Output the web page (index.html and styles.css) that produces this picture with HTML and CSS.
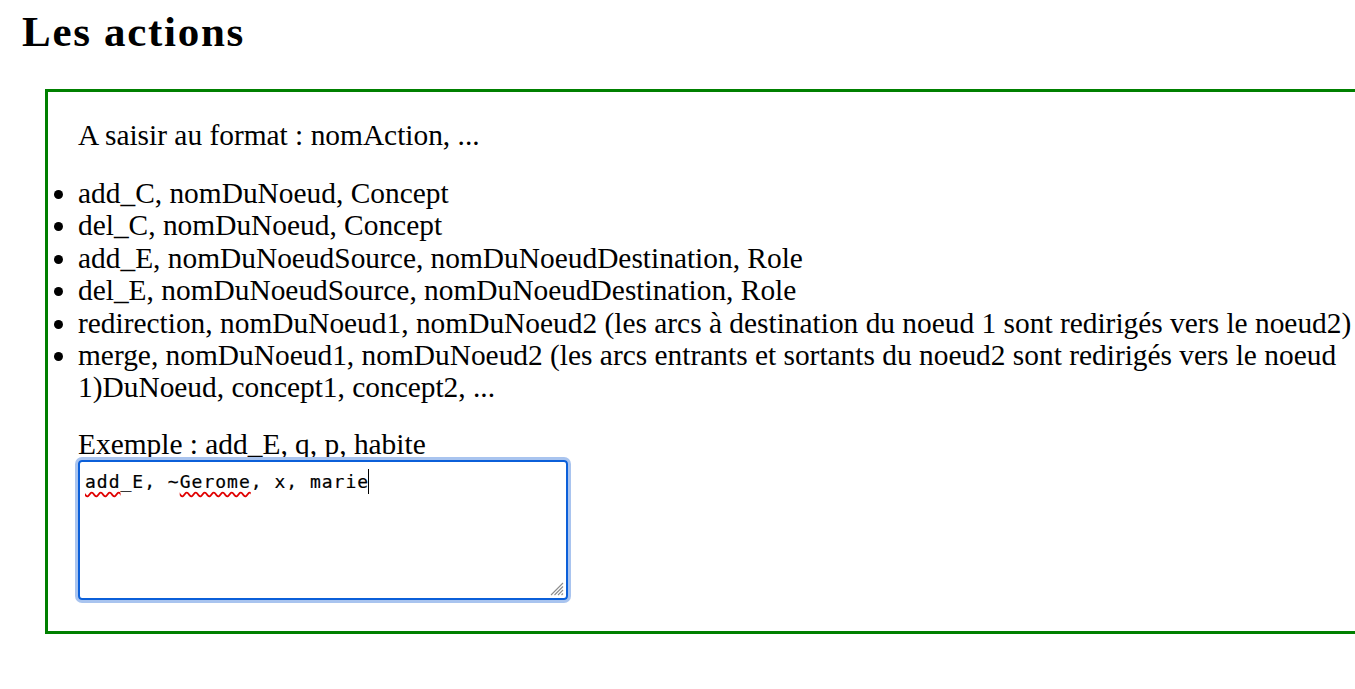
FILE: index.html
```html
<!DOCTYPE html>
<html lang="fr">
<head>
<meta charset="utf-8">
<title>Les actions</title>
<link rel="stylesheet" href="styles.css">
</head>
<body>
<h1 class="title">Les actions</h1>
<div class="panel">
  <p class="intro">A saisir au format : nomAction, ...</p>
  <ul class="actions">
    <li>add_C, nomDuNoeud, Concept</li>
    <li>del_C, nomDuNoeud, Concept</li>
    <li>add_E, nomDuNoeudSource, nomDuNoeudDestination, Role</li>
    <li>del_E, nomDuNoeudSource, nomDuNoeudDestination, Role</li>
    <li>redirection, nomDuNoeud1, nomDuNoeud2 (les arcs à destination du noeud 1 sont redirigés vers le noeud2)</li>
    <li>merge, nomDuNoeud1, nomDuNoeud2 (les arcs entrants et sortants du noeud2 sont redirigés vers le noeud 1)DuNoeud, concept1, concept2, ...</li>
  </ul>
  <p class="example">Exemple : add_E, q, p, habite</p>
  <div class="editor" role="textbox" aria-multiline="true"><span class="misspelled">add</span>_E, ~<span class="misspelled">Gerome</span>, x, marie<span class="caret"></span><svg class="grip" width="14" height="14" viewBox="0 0 14 14"><path d="M13 1 L1 13 M13 4.5 L4.5 13 M13 8 L8 13 M13 11.5 L11.5 13" stroke="#8d8d8d" stroke-width="1.1"/></svg></div>
</div>
</body>
</html>
```
FILE: styles.css
```css
html, body {
  margin: 0;
  padding: 0;
  background: #ffffff;
  overflow: hidden;
}
body {
  font-family: Georgia, "Liberation Serif", serif;
  color: #000;
  width: 1355px;
}
.title {
  font-size: 43px;
  line-height: 46px;
  font-weight: bold;
  letter-spacing: 1.7px;
  margin: 9px 0 0 22px;
}
.panel {
  margin: 34px 0 0 45px;
  border: 3px solid #008000;
  padding: 27px 0 31px 30px;
  width: 1290px;
  font-size: 29.4px;
  line-height: 32.4px;
}
.intro {
  margin: 0 0 25.6px 0;
}
.actions {
  margin: 0 0 25.6px 0;
  padding: 0;
  list-style: disc outside;
}
.example {
  margin: 0;
  line-height: 30px;
}
.editor {
  position: relative;
  box-sizing: border-box;
  width: 490px;
  height: 140px;
  margin-top: 1px;
  border: 2px solid #0b5fd9;
  border-radius: 4px;
  box-shadow: 0 0 0 3px #a9c4ef;
  padding: 7px 5px;
  font-family: "DejaVu Sans Mono", monospace;
  font-size: 18px;
  letter-spacing: 1px;
  line-height: 22px;
  white-space: pre;
  -webkit-text-stroke: 0.2px #000;
}
.misspelled {
  text-decoration: underline wavy #e00000;
  text-decoration-skip-ink: none;
  text-underline-offset: 3px;
  -webkit-text-stroke: 0.2px #000;
}
.caret {
  display: inline-block;
  width: 0;
  height: 25px;
  border-left: 1px solid #000;
  vertical-align: -6px;
  margin-left: -1px;
}
.grip {
  position: absolute;
  right: 2px;
  bottom: 2px;
}
```
